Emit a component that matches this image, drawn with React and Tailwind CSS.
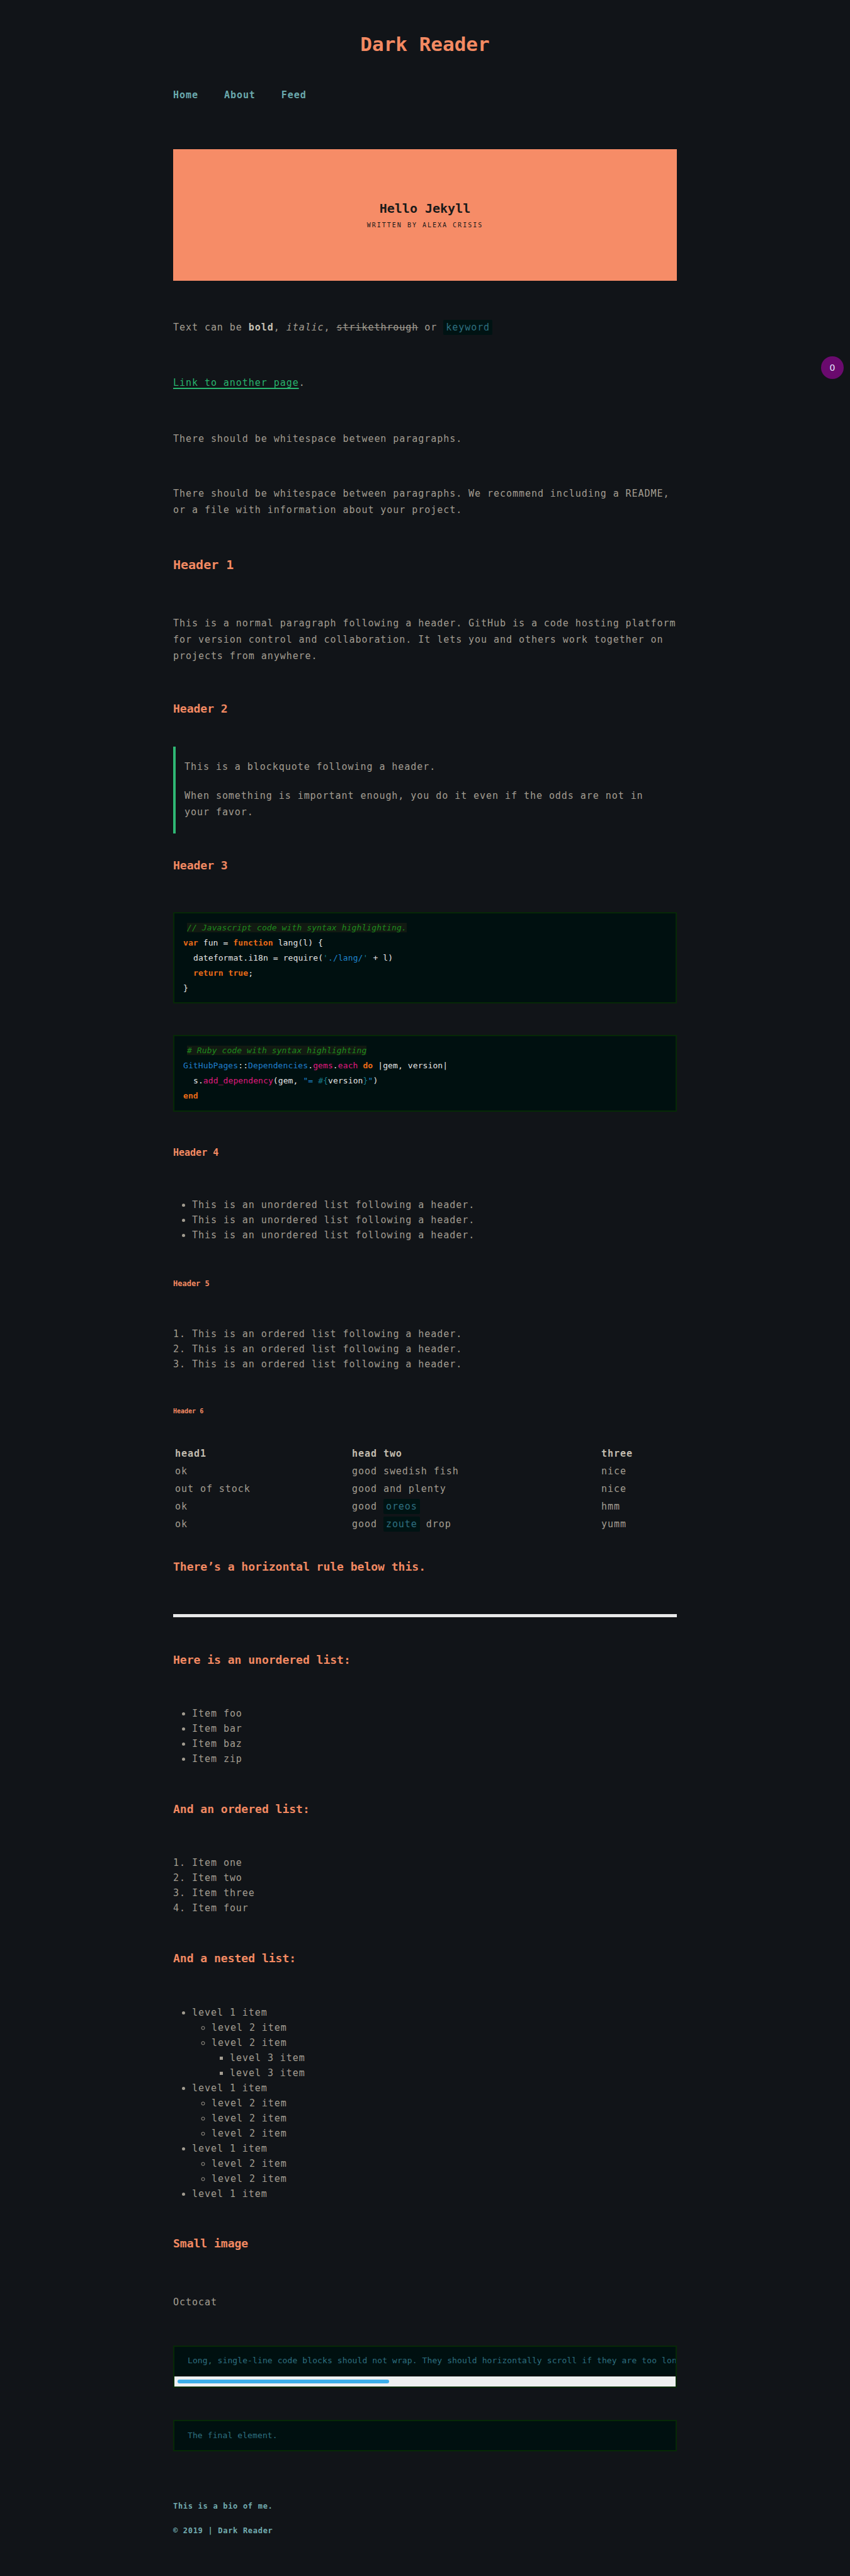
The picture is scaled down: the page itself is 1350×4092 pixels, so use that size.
import React from 'react';

const nested = [
  { t: 'level 1 item', c: [{ t: 'level 2 item' }, { t: 'level 2 item', c: [{ t: 'level 3 item' }, { t: 'level 3 item' }] }] },
  { t: 'level 1 item', c: [{ t: 'level 2 item' }, { t: 'level 2 item' }, { t: 'level 2 item' }] },
  { t: 'level 1 item', c: [{ t: 'level 2 item' }, { t: 'level 2 item' }] },
  { t: 'level 1 item' },
];

const mono = "font-['DejaVu_Sans_Mono','Liberation_Mono',monospace]";

function Heading({ className = '', children }) {
  return <h2 className={`font-bold text-[#f48a62] ${className}`}>{children}</h2>;
}

function Kbd({ children }) {
  return (
    <code className={`${mono} text-[15px] bg-[#001313] text-[#2e6f80] px-[4px] py-[3px] rounded-[2px]`}>
      {children}
    </code>
  );
}

function CodeBox({ className = '', children }) {
  return (
    <div className={`border-2 border-[#062906] bg-[#001010] text-[13px] leading-[24px] ${className}`}>
      {children}
    </div>
  );
}

export default function App() {
  return (
    <div className={`min-h-screen bg-[#111418] ${mono} text-[#a39d91] relative`}>
      {/* purple counter badge on the right edge */}
      <div className="absolute left-[1304px] top-[566px] w-[36px] h-[36px] rounded-full bg-[#6a0a6e] flex items-center justify-center text-[14px] text-[#e6e6ff] font-['DejaVu_Sans',sans-serif]">
        0
      </div>

      <div className="w-[800px] mx-auto pt-[50px] pb-[65px]">
        <header>
          <h1 className="text-center text-[31px] leading-[40px] font-bold text-[#f48a62]">Dark Reader</h1>
          <nav className="mt-[49px] flex gap-[41px] text-[15px] leading-[24px] tracking-[0.95px] font-bold text-[#6aa9ad]">
            <a href="#">Home</a>
            <a href="#">About</a>
            <a href="#">Feed</a>
          </nav>
        </header>

        <div className="mt-[74px] h-[209px] bg-[#f68c67] flex flex-col items-center justify-center gap-[8px] text-[#1a1a1a]">
          <div className="text-[20px] leading-[24px] font-bold">Hello Jekyll</div>
          <div className="text-[10px] leading-[14px] tracking-[2px]">WRITTEN BY ALEXA CRISIS</div>
        </div>

        <div className="text-[15px] leading-[26px] tracking-[0.95px]">
          <p className="mt-[61px]">
            Text can be <b className="text-[#c9c3b6]">bold</b>, <i>italic</i>, <s>strikethrough</s> or <Kbd>keyword</Kbd>
          </p>
          <p className="mt-[62px]">
            <a href="#" className="text-[#27b36c] underline decoration-2 decoration-[#27b36c] underline-offset-[3px]">Link to another page</a>.
          </p>
          <p className="mt-[63px]">There should be whitespace between paragraphs.</p>
          <p className="mt-[61px]">
            There should be whitespace between paragraphs. We recommend including a README, or a file with information about your project.
          </p>

          <Heading className="mt-[60px] text-[20px] leading-[28px] tracking-[0px]">Header 1</Heading>
          <p className="mt-[66px]">
            This is a normal paragraph following a header. GitHub is a code hosting platform for version control and collaboration. It lets you and others work together on projects from anywhere.
          </p>

          <Heading className="mt-[58px] text-[18px] leading-[26px] tracking-[0px]">Header 2</Heading>
          <blockquote className="mt-[47px] border-l-4 border-[#2fb774] pl-[14px] pr-[20px] pt-[19px] pb-[21px]">
            <p>This is a blockquote following a header.</p>
            <p className="mt-[20px]">When something is important enough, you do it even if the odds are not in your favor.</p>
          </blockquote>

          <Heading className="mt-[38px] text-[18px] leading-[26px] tracking-[0px]">Header 3</Heading>
        </div>

        <CodeBox className="mt-[61px] px-[14px] pt-[11px] pb-[10px] tracking-[0.1px] text-[#e6e6e6]">
          <div><span className="ml-[6px] italic text-[#1d8a1d] bg-[#121a12]">// Javascript code with syntax highlighting.</span></div>
          <div><span className="font-bold text-[#ec6a17]">var</span> fun = <span className="font-bold text-[#ec6a17]">function</span> lang(l) {'{'}</div>
          <div className="pl-[16px]">dateformat.i18n = require(<span className="text-[#167a8a]">'</span><span className="text-[#1f86cf]">./lang/</span><span className="text-[#167a8a]">'</span> + l)</div>
          <div className="pl-[16px]"><span className="font-bold text-[#ec6a17]">return</span> <span className="font-bold text-[#ec6a17]">true</span>;</div>
          <div>{'}'}</div>
        </CodeBox>

        <CodeBox className="mt-[50px] px-[14px] pt-[11px] pb-[11px] tracking-[0.1px] text-[#e6e6e6]">
          <div><span className="ml-[6px] italic text-[#1d8a1d] bg-[#121a12]"># Ruby code with syntax highlighting</span></div>
          <div>
            <span className="text-[#1f7fcf]">GitHubPages</span>::<span className="text-[#1f7fcf]">Dependencies</span>.<span className="text-[#e0197e]">gems</span>.<span className="text-[#e0197e]">each</span> <span className="font-bold text-[#ec6a17]">do</span> |gem, version|
          </div>
          <div className="pl-[16px]">
            s.<span className="text-[#e0197e]">add_dependency</span>(gem, <span className="text-[#1f86cf]">"= </span><span className="text-[#167a8a]">#{'{'}</span>version<span className="text-[#167a8a]">{'}'}</span><span className="text-[#1f86cf]">"</span>)
          </div>
          <div><span className="font-bold text-[#ec6a17]">end</span></div>
        </CodeBox>

        <Heading className="mt-[54px] text-[15px] leading-[22px]">Header 4</Heading>
        <ul className="mt-[60px] list-disc pl-[30px] text-[15px] leading-[24px] tracking-[0.95px]">
          <li>This is an unordered list following a header.</li>
          <li>This is an unordered list following a header.</li>
          <li>This is an unordered list following a header.</li>
        </ul>

        <Heading className="mt-[56px] text-[12px] leading-[18px]">Header 5</Heading>
        <ol className="mt-[59px] list-decimal pl-[30px] text-[15px] leading-[24px] tracking-[0.95px]">
          <li>This is an ordered list following a header.</li>
          <li>This is an ordered list following a header.</li>
          <li>This is an ordered list following a header.</li>
        </ol>

        <Heading className="mt-[56px] text-[10px] leading-[14px]">Header 6</Heading>

        <div className="mt-[46px] grid grid-cols-[281px_396px_1fr] auto-rows-[28px] text-[15px] leading-[28px] tracking-[0.95px]">
          {[
            ['head1', 'head two', 'three'],
            ['ok', 'good swedish fish', 'nice'],
            ['out of stock', 'good and plenty', 'nice'],
            ['ok', 'oreos', 'hmm'],
            ['ok', 'zoute', 'yumm'],
          ].map((row, i) =>
            row.map((cell, j) => (
              <div key={`${i}-${j}`} className={`px-[3px] ${i === 0 ? 'font-bold text-[#c2bcaf]' : ''}`}>
                {i >= 3 && j === 1 ? (
                  <>
                    good <Kbd>{cell}</Kbd>
                    {i === 4 ? ' drop' : ''}
                  </>
                ) : (
                  cell
                )}
              </div>
            ))
          )}
        </div>

        <Heading className="mt-[41px] text-[18px] leading-[26px]">There’s a horizontal rule below this.</Heading>
        <hr className="mt-[62px] h-[5px] border-0 bg-[#e8e8e8]" />

        <Heading className="mt-[55px] text-[18px] leading-[26px]">Here is an unordered list:</Heading>
        <ul className="mt-[60px] list-disc pl-[30px] text-[15px] leading-[24px] tracking-[0.95px]">
          <li>Item foo</li>
          <li>Item bar</li>
          <li>Item baz</li>
          <li>Item zip</li>
        </ul>

        <Heading className="mt-[55px] text-[18px] leading-[26px]">And an ordered list:</Heading>
        <ol className="mt-[60px] list-decimal pl-[30px] text-[15px] leading-[24px] tracking-[0.95px]">
          <li>Item one</li>
          <li>Item two</li>
          <li>Item three</li>
          <li>Item four</li>
        </ol>

        <Heading className="mt-[55px] text-[18px] leading-[26px]">And a nested list:</Heading>
        <ul className="mt-[61px] list-disc pl-[30px] text-[15px] leading-[24px] tracking-[0.95px]">
          {nested.map((a, i) => (
            <li key={i}>
              {a.t}
              {a.c && (
                <ul className="list-[circle] pl-[31px]">
                  {a.c.map((b, k) => (
                    <li key={k}>
                      {b.t}
                      {b.c && (
                        <ul className="list-[square] pl-[29px]">
                          {b.c.map((c, m) => (
                            <li key={m}>{c.t}</li>
                          ))}
                        </ul>
                      )}
                    </li>
                  ))}
                </ul>
              )}
            </li>
          ))}
        </ul>

        <Heading className="mt-[54px] text-[18px] leading-[26px]">Small image</Heading>
        <p className="mt-[67px] text-[15px] leading-[26px] tracking-[0.95px]">Octocat</p>

        <div className="mt-[56px] border-2 border-[#062906] bg-[#001010] text-[13px] leading-[24px] tracking-[0.1px] text-[#2e6f80]">
          <div className="pl-[21px] pt-[10px] pb-[13px] whitespace-nowrap overflow-hidden">
            Long, single-line code blocks should not wrap. They should horizontally scroll if they are too long. This line should be long enough to demonstrate this.
          </div>
          <div className="h-[16px] bg-[#eff0f1] flex items-center px-[5px]">
            <div className="w-[336px] h-[6px] rounded-full bg-[#3daee9]"></div>
          </div>
        </div>

        <CodeBox className="mt-[51px] px-[21px] pt-[11px] pb-[11px] tracking-[0.1px] text-[#2e6f80]">
          <div>The final element.</div>
        </CodeBox>

        <footer className="mt-[78px] text-[12px] leading-[18px] font-bold text-[#72acb0] tracking-[0.7px]">
          <p>This is a bio of me.</p>
          <p className="mt-[21px]">© 2019 | Dark Reader</p>
        </footer>
      </div>
    </div>
  );
}
